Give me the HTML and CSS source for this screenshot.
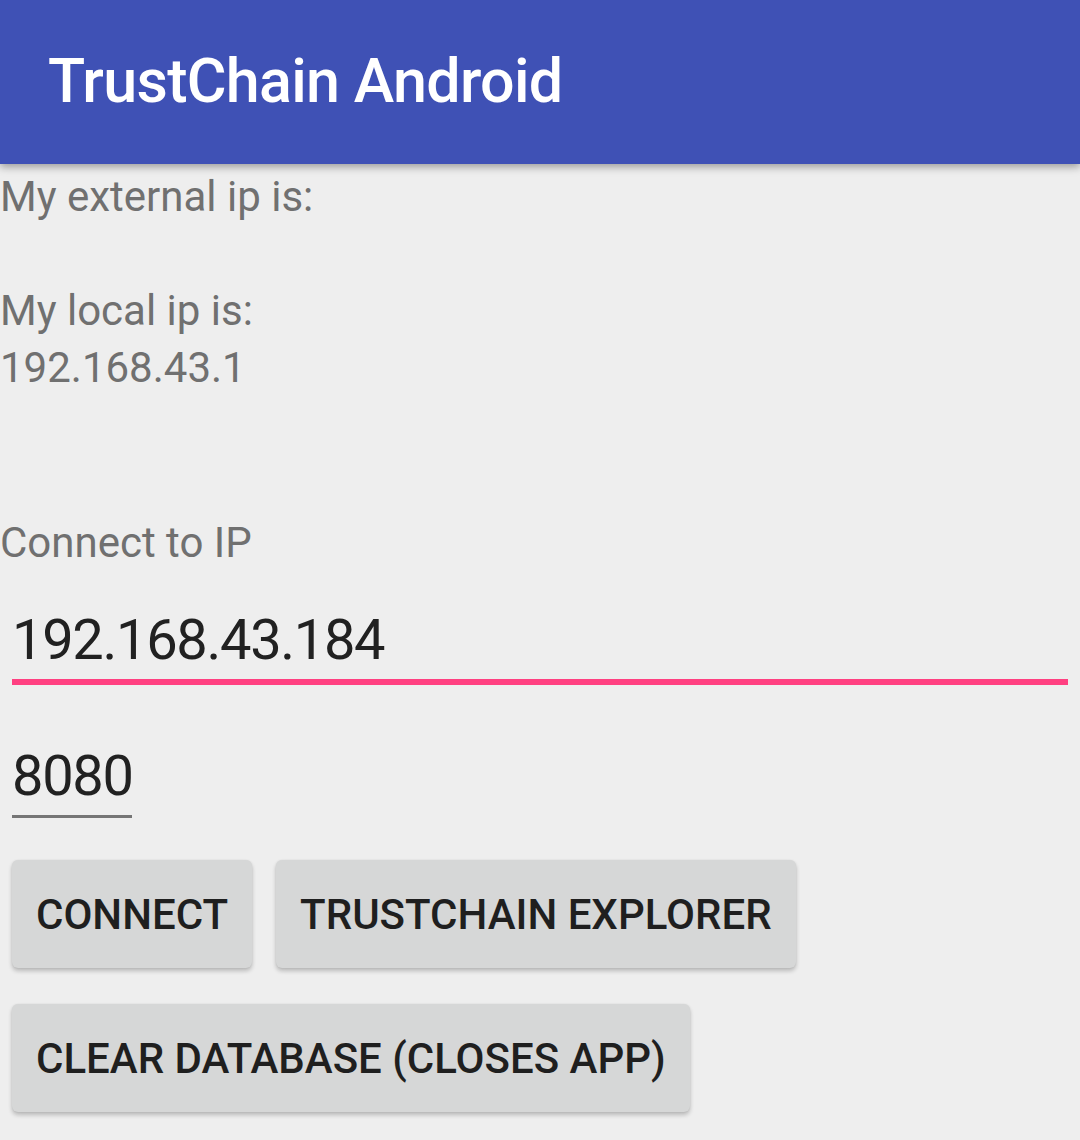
FILE: index.html
```html
<!DOCTYPE html>
<html>
<head>
<meta charset="utf-8">
<link rel="stylesheet" href="styles.css">
</head>
<body>
<header class="appbar"><h1 class="title">TrustChain Android</h1></header>
<main class="content">
  <div class="info">
    <p class="line">My external ip is:</p>
    <p class="line"></p>
    <p class="line">My local ip is:</p>
    <p class="line">192.168.43.1</p>
  </div>
  <p class="line label">Connect to IP</p>
  <div class="field field-focused">192.168.43.184</div>
  <div class="field field-port">8080</div>
  <div class="buttons">
    <div class="btn-row">
      <button class="btn">CONNECT</button>
      <button class="btn">TRUSTCHAIN EXPLORER</button>
    </div>
    <div class="btn-row">
      <button class="btn">CLEAR DATABASE (CLOSES APP)</button>
    </div>
  </div>
</main>
</body>
</html>
```
FILE: styles.css
```css
html, body {
  margin: 0;
  padding: 0;
  background: #eeeeee;
  font-family: Roboto, "Noto Sans", sans-serif;
  width: 1080px;
  height: 1140px;
  overflow: hidden;
}
.appbar {
  height: 164px;
  background: #3f51b5;
  box-shadow: 0 3px 8px rgba(0,0,0,0.35);
  display: flex;
  align-items: center;
  padding-left: 48px;
  position: relative;
  z-index: 1;
}
.title {
  margin: 0;
  margin-top: -2px;
  color: #ffffff;
  font-weight: 500;
  font-size: 61px;
  letter-spacing: -0.7px;
  line-height: 1;
}
.content {
  padding-top: 4px;
}
.line {
  margin: 0;
  font-size: 42px;
  line-height: 57px;
  height: 57px;
  color: #707070;
}
.label {
  margin-top: 118px;
}
.field {
  margin: 0 12px;
  font-size: 56px;
  letter-spacing: -1.3px;
  line-height: 57px;
  color: #212121;
  padding-bottom: 10px;
}
.field-focused {
  margin-top: 41px;
  border-bottom: 6px solid #ff4081;
}
.field-port {
  margin-top: 63px;
  width: 120px;
  border-bottom: 3px solid #757575;
}
.buttons {
  margin-top: 42px;
  padding-left: 12px;
  display: flex;
  flex-direction: column;
  gap: 36px;
}
.btn-row {
  display: flex;
  gap: 24px;
}
.btn {
  height: 108px;
  padding: 0 24px;
  border: none;
  border-radius: 6px;
  background: #d6d7d7;
  box-shadow: 0 3px 4px rgba(0,0,0,0.22), 0 0 2px rgba(0,0,0,0.08);
  font-family: Roboto, "Noto Sans", sans-serif;
  font-weight: 500;
  font-size: 42px;
  color: #1f1f1f;
}
```
